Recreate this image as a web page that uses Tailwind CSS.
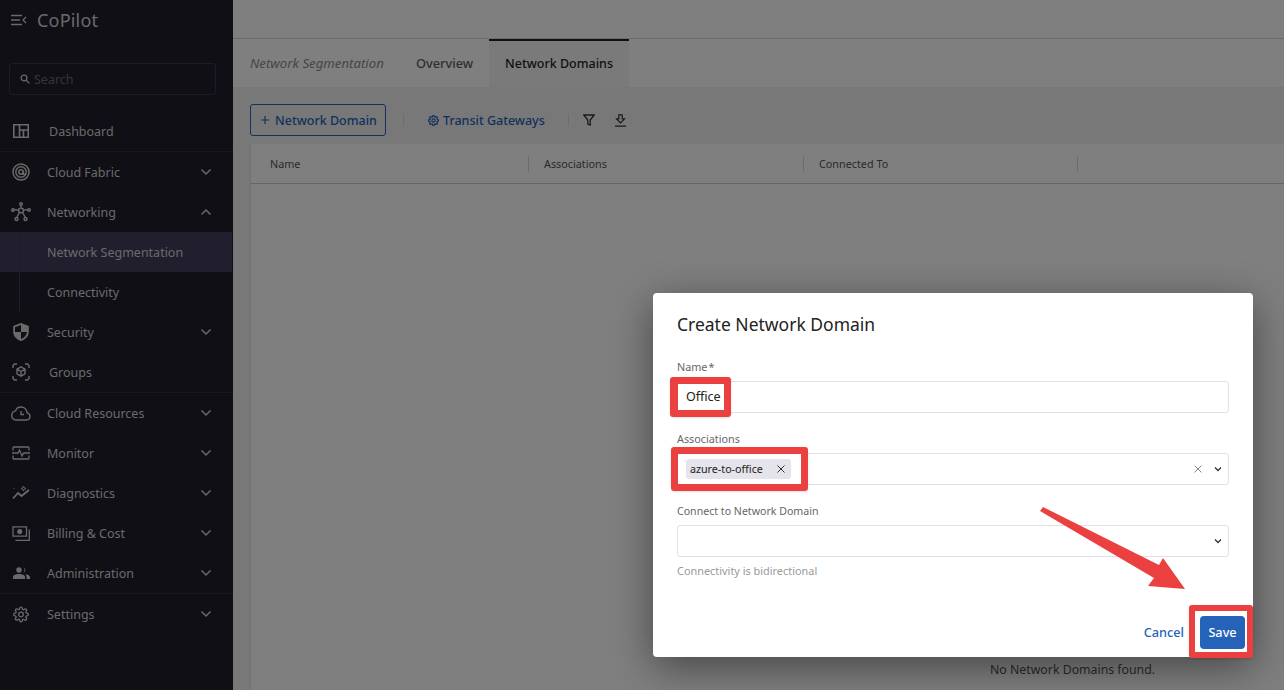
<!DOCTYPE html>
<html lang="en">
<head>
  <meta charset="UTF-8" />
  <title>CoPilot | Network Domains</title>
  <script src="https://cdn.jsdelivr.net/npm/@tailwindcss/browser@4"></script>
</head>
<body class="relative w-[1284px] h-[690px] overflow-hidden bg-[#f0f0f0] font-['Noto_Sans',sans-serif] text-[#222]">

  <div class="flex h-[690px]">
    <!-- Sidebar -->
    <aside class="w-[233px] shrink-0 bg-[#1e1e2b] text-[#d4d4d4] text-[12.5px]">
      <div class="h-[40px] flex items-center pl-[11px] gap-[10px]">
        <svg class="w-[16px] h-[12px]" viewBox="0 0 16 12" fill="none" stroke="currentColor" stroke-width="1.3"><path d="M0 1.5h11M0 6h9M0 10.5h11M15 3l-3 3 3 3"/></svg>
        <span class="text-[18px] tracking-[0.2px]">CoPilot</span>
      </div>
      <div class="ml-[9px] mr-[17px] mt-[23px] h-[32px] border border-[#38384a] rounded-[3px] flex items-center pl-[10px] gap-[4px] text-[#6b6b75]">
        <svg class="w-[10px] h-[10px] text-[#cfcfcf]" viewBox="0 0 10 10" fill="none" stroke="currentColor" stroke-width="1.3"><circle cx="4" cy="4" r="2.9"/><path d="M6.2 6.2 9.4 9.4"/></svg>
        <span class="text-[12.5px] pt-[2px]">Search</span>
      </div>

      <nav class="mt-[16px]">
        <div class="h-[40px] flex items-center pl-[13px] pr-[21px]">
          <svg class="w-[16px] h-[14px]" viewBox="0 0 16 14" fill="none" stroke="currentColor" stroke-width="1.6"><path d="M.8.8h14.4v12.4H.8zM6.5.8v12.4M6.5 6h8.7M10.5 6v7.2"/></svg>
          <span class="ml-[20px] pt-[2px]">Dashboard</span>
        </div>
        <div class="h-px bg-[#30303e]"></div>
        <div class="h-[40px] flex items-center pl-[12px] pr-[21px]">
          <svg class="w-[18px] h-[18px]" viewBox="0 0 18 18" fill="none" stroke="currentColor" stroke-width="1.5"><circle cx="9" cy="9" r="8"/><circle cx="9" cy="9" r="5.2"/><circle cx="9" cy="9" r="2.2"/><path d="M11.2 8v3.2h2"/></svg>
          <span class="ml-[17px] pt-[2px]">Cloud Fabric</span>
          <svg class="ml-auto w-[12px] h-[8px]" viewBox="0 0 12 8" fill="none" stroke="currentColor" stroke-width="1.5"><path d="M1.5 1.5 6 6l4.500-4.500"/></svg>
        </div>
        <div class="h-[40px] flex items-center pl-[11px] pr-[21px]">
          <svg class="w-[20px] h-[20px]" viewBox="0 0 20 20" fill="none" stroke="currentColor" stroke-width="1.4"><path d="m7.8 7 2.2-1.200L12.200 7v2.800L10 11 7.800 9.800zM10 5.800V3.200M7.800 8.200 3.600 7.600M12.200 8.200l4.200-.6M8.200 10.800 6 15M11.800 10.800 14 15"/><circle cx="10" cy="2" r="1.300"/><circle cx="2" cy="8" r="1.300"/><circle cx="18" cy="8" r="1.300"/><circle cx="5.500" cy="17" r="1.500"/><circle cx="14.500" cy="17" r="1.500"/></svg>
          <span class="ml-[16px] pt-[2px]">Networking</span>
          <svg class="ml-auto w-[12px] h-[8px]" viewBox="0 0 12 8" fill="none" stroke="currentColor" stroke-width="1.5"><path d="M1.500 6.500 6 2l4.500 4.500"/></svg>
        </div>
        <div class="relative">
          <div class="absolute left-[19px] top-0 bottom-0 w-px bg-[#3a3a4a]"></div>
          <div class="h-[40px] mr-px flex items-center pl-[47px] pt-[2px] bg-[#433c5c]">Network Segmentation</div>
          <div class="h-[40px] flex items-center pl-[47px] pt-[2px]">Connectivity</div>
        </div>
        <div class="h-[40px] flex items-center pl-[13px] pr-[21px]">
          <svg class="w-[16px] h-[18px]" viewBox="0 0 16 18" fill="currentColor"><path d="M8 0 .2 3v5.500C.2 13 3.300 16.700 8 18c4.700-1.300 7.800-5 7.800-9.500V3zM8 2v7H2V4.300zM8 9h6c-.4 3.300-2.700 5.900-6 7z"/></svg>
          <span class="ml-[18px] pt-[2px]">Security</span>
          <svg class="ml-auto w-[12px] h-[8px]" viewBox="0 0 12 8" fill="none" stroke="currentColor" stroke-width="1.5"><path d="M1.500 1.500 6 6l4.500-4.500"/></svg>
        </div>
        <div class="h-[40px] flex items-center pl-[12px] pr-[21px]">
          <svg class="w-[18px] h-[18px]" viewBox="0 0 18 18" fill="none" stroke="currentColor" stroke-width="1.400"><path d="M1 5V2.500L2.500 1H5M13 1h2.500L17 2.500V5M17 13v2.500L15.500 17H13M5 17H2.500L1 15.500V13M9 3.800l4 2.300v4.800l-4 2.300-4-2.300V6.100zM5 6.100l4 2.400 4-2.400M9 8.500v4.700"/></svg>
          <span class="ml-[19px] pt-[2px]">Groups</span>
        </div>
        <div class="h-px bg-[#30303e]"></div>
        <div class="h-[40px] flex items-center pl-[11px] pr-[21px]">
          <svg class="w-[20px] h-[15px]" viewBox="0 0 20 15" fill="none" stroke="currentColor" stroke-width="1.400"><path d="M5 14h10.500a3.600 3.600 0 0 0 .7-7.100C15.700 3.300 13 1 10 1 7.400 1 5.300 2.600 4.500 4.900A4.600 4.600 0 0 0 5 14zM10 5v3.500h3"/></svg>
          <span class="ml-[16px] pt-[2px]">Cloud Resources</span>
          <svg class="ml-auto w-[12px] h-[8px]" viewBox="0 0 12 8" fill="none" stroke="currentColor" stroke-width="1.5"><path d="M1.500 1.500 6 6l4.500-4.500"/></svg>
        </div>
        <div class="h-[40px] flex items-center pl-[12px] pr-[21px]">
          <svg class="w-[18px] h-[14px]" viewBox="0 0 18 14" fill="none" stroke="currentColor" stroke-width="1.300"><path d="M1 4.500V1.700L1.700 1h14.600l.7.700v2.800M1 9.500v2.800l.7.700h14.600l.7-.7V9.500M0 7h6l1.500-3 2.500 6 1.500-3H18"/></svg>
          <span class="ml-[17px] pt-[2px]">Monitor</span>
          <svg class="ml-auto w-[12px] h-[8px]" viewBox="0 0 12 8" fill="none" stroke="currentColor" stroke-width="1.5"><path d="M1.500 1.500 6 6l4.500-4.500"/></svg>
        </div>
        <div class="h-[40px] flex items-center pl-[12px] pr-[21px]">
          <svg class="w-[18px] h-[14px]" viewBox="0 0 18 14" fill="none" stroke="currentColor" stroke-width="1.800"><path d="m1 12.500 5-5.500 3.500 3L17 4"/><path d="M11.500 0l.7 1.800 1.800.7-1.800.7-.7 1.800-.7-1.800L9 2.500l1.800-.7zM1.500 2.500h.8" stroke-width="1"/></svg>
          <span class="ml-[17px] pt-[2px]">Diagnostics</span>
          <svg class="ml-auto w-[12px] h-[8px]" viewBox="0 0 12 8" fill="none" stroke="currentColor" stroke-width="1.5"><path d="M1.500 1.500 6 6l4.500-4.500"/></svg>
        </div>
        <div class="h-[40px] flex items-center pl-[12px] pr-[21px]">
          <svg class="w-[18px] h-[15px]" viewBox="0 0 18 15" fill="none" stroke="currentColor" stroke-width="1.300"><path d="M1 .8h13.500v9.400H1z"/><circle cx="7.700" cy="5.500" r="1.900" fill="currentColor"/><path d="M17.300 3.500v10.800H3.500"/></svg>
          <span class="ml-[17px] pt-[2px]">Billing &amp; Cost</span>
          <svg class="ml-auto w-[12px] h-[8px]" viewBox="0 0 12 8" fill="none" stroke="currentColor" stroke-width="1.5"><path d="M1.500 1.500 6 6l4.500-4.500"/></svg>
        </div>
        <div class="h-[40px] flex items-center pl-[13px] pr-[21px]">
          <svg class="w-[17px] h-[12px]" viewBox="0 0 17 12" fill="currentColor"><circle cx="6" cy="3" r="2.700"/><path d="M0 12V10c0-1.800 2.700-3 6-3s6 1.200 6 3v2z"/><path d="M10.500.5a2.700 2.700 0 0 1 0 5.200 4 4 0 0 0 0-5.200zM12.500 7.300c2.500.3 4.500 1.300 4.500 2.800V12h-3.500v-2c0-1-.4-2-1-2.700z"/></svg>
          <span class="ml-[17px] pt-[2px]">Administration</span>
          <svg class="ml-auto w-[12px] h-[8px]" viewBox="0 0 12 8" fill="none" stroke="currentColor" stroke-width="1.5"><path d="M1.500 1.500 6 6l4.500-4.500"/></svg>
        </div>
        <div class="h-px bg-[#30303e]"></div>
        <div class="h-[40px] flex items-center pl-[13px] pr-[21px]">
          <svg class="w-[16px] h-[17px]" viewBox="0 0 24 24" fill="none" stroke="currentColor" stroke-width="2"><path d="M12 15.500a3.500 3.500 0 1 0 0-7 3.500 3.500 0 0 0 0 7z"/><path d="M19.400 15a1.700 1.700 0 0 0 .3 1.800l.1.100a2 2 0 1 1-2.900 2.900l-.1-.1a1.700 1.700 0 0 0-2.800 1.200V21a2 2 0 1 1-4 0v-.1a1.700 1.700 0 0 0-2.900-1.200l-.1.100a2 2 0 1 1-2.800-2.900l.1-.1a1.700 1.700 0 0 0-1.200-2.800H3a2 2 0 1 1 0-4h.1a1.700 1.700 0 0 0 1.200-2.900l-.1-.1a2 2 0 1 1 2.900-2.800l.1.100a1.700 1.700 0 0 0 2.800-1.200V3a2 2 0 1 1 4 0v.1a1.700 1.700 0 0 0 2.900 1.200l.1-.1a2 2 0 1 1 2.800 2.900l-.1.100a1.700 1.700 0 0 0 1.200 2.800h.1a2 2 0 1 1 0 4h-.1a1.700 1.700 0 0 0-1.500 1z"/></svg>
          <span class="ml-[18px] pt-[2px]">Settings</span>
          <svg class="ml-auto w-[12px] h-[8px]" viewBox="0 0 12 8" fill="none" stroke="currentColor" stroke-width="1.5"><path d="M1.500 1.500 6 6l4.500-4.500"/></svg>
        </div>
      </nav>
    </aside>

    <!-- Main -->
    <main class="flex-1 min-w-0 flex flex-col">
      <div class="h-[39px] shrink-0 bg-white border-b border-[#d8d8d8]"></div>
      <div class="h-[48px] shrink-0 bg-white flex text-[12.5px] font-medium">
        <span class="w-[183px] pl-[17px] pt-[2px] flex items-center italic font-normal text-[13.2px] text-[#8a8a8a]">Network Segmentation</span>
        <span class="w-[73px] flex items-center pt-[1px] text-[12.8px] text-[#5e5e5e]">Overview</span>
        <span class="w-[140px] flex items-center justify-center bg-[#f5f5f5] border-t-2 border-[#1e1e2b] text-[#1e1e2b]">Network Domains</span>
      </div>
      <div class="flex-1 min-h-0 flex flex-col pl-[17px] bg-[#f1f1f1]">
        <div class="h-[57px] shrink-0 flex items-center pt-[9px] text-[12.5px] font-medium text-[#2563b8]">
          <div class="w-[136px] h-[32px] border border-[#2563b8] rounded-[3px] flex items-center pl-[10px] gap-[6px]">
            <svg class="w-[8px] h-[8px]" viewBox="0 0 8 8" stroke="currentColor" stroke-width="1.200"><path d="M4 0v8M0 4h8"/></svg>
            <span class="pt-[2px]">Network Domain</span>
          </div>
          <div class="ml-[17px] w-px h-[12px] bg-[#dcdcdc]"></div>
          <svg class="ml-[24px] w-[11px] h-[11px]" viewBox="0 0 24 24" fill="none" stroke="currentColor" stroke-width="2.600"><path d="M12 15.500a3.500 3.500 0 1 0 0-7 3.500 3.500 0 0 0 0 7z"/><path d="M19.400 15a1.700 1.700 0 0 0 .3 1.800l.1.100a2 2 0 1 1-2.900 2.900l-.1-.1a1.700 1.700 0 0 0-2.800 1.200V21a2 2 0 1 1-4 0v-.1a1.700 1.700 0 0 0-2.900-1.200l-.1.100a2 2 0 1 1-2.800-2.900l.1-.1a1.700 1.700 0 0 0-1.200-2.800H3a2 2 0 1 1 0-4h.1a1.700 1.700 0 0 0 1.200-2.900l-.1-.1a2 2 0 1 1 2.900-2.800l.1.100a1.700 1.700 0 0 0 2.800-1.200V3a2 2 0 1 1 4 0v.1a1.700 1.700 0 0 0 2.900 1.200l.1-.1a2 2 0 1 1 2.800 2.900l-.1.100a1.700 1.700 0 0 0 1.200 2.800h.1a2 2 0 1 1 0 4h-.1a1.700 1.700 0 0 0-1.500 1z"/></svg>
          <span class="ml-[4px] pt-[2px]">Transit Gateways</span>
          <div class="ml-[23px] w-px h-[12px] bg-[#dcdcdc]"></div>
          <svg class="ml-[14px] w-[12px] h-[12px] text-[#333]" viewBox="0 0 12 12" fill="none" stroke="currentColor" stroke-width="1.300"><path d="M.8 1h10.400L7.200 6v5L4.800 10V6z"/></svg>
          <svg class="ml-[20px] w-[11px] h-[13px] text-[#333]" viewBox="0 0 11 13" fill="none" stroke="currentColor" stroke-width="1.200"><path d="M3.800 .8h3.400v4h2.300L5.500 9 1.500 4.800h2.300zM0 12.200h11"/></svg>
        </div>
        <div class="flex-1 min-h-0 bg-white rounded-tl-[4px] border-l border-[#e0e0e0] flex flex-col">
          <div class="h-[40px] shrink-0 flex items-center border-b border-[#c8c8c8] bg-white text-[10.8px] text-[#555]">
            <div class="w-[278px] h-[16px] flex items-center pl-[19px] pt-[2px] border-r border-[#d8d8d8]">Name</div>
            <div class="w-[275px] h-[16px] flex items-center pl-[15px] pt-[2px] border-r border-[#d8d8d8]">Associations</div>
            <div class="w-[274px] h-[16px] flex items-center pl-[15px] pt-[2px] border-r border-[#d8d8d8]">Connected To</div>
          </div>
          <div class="flex-1 pt-[477px] pl-[739px] text-[12.3px] leading-[18px] text-[#555] whitespace-nowrap">No Network Domains found.</div>
        </div>
      </div>
    </main>
  </div>

  <!-- Backdrop -->
  <div class="absolute inset-0 bg-black/50"></div>

  <!-- Dialog -->
  <div class="absolute left-[653px] top-[293px] w-[600px] h-[364px] bg-white rounded-[4px] shadow-[0_10px_40px_rgba(0,0,0,0.45)] px-[24px] pt-[19px]">
    <h2 class="text-[17.5px] leading-[25px] text-[#222]">Create Network Domain</h2>
    <label class="block mt-[23px] text-[10.8px] leading-[14px] text-[#666]">Name<span class="ml-[1px]">*</span></label>
    <div class="mt-[7px] h-[32px] border border-[#e0e0e6] rounded-[3px] flex items-center pl-[8px] text-[12.5px] text-[#222]">Office</div>
    <label class="block mt-[19px] text-[10.8px] leading-[14px] text-[#666]">Associations</label>
    <div class="mt-[7px] h-[32px] border border-[#e0e0e6] rounded-[3px] flex items-center pl-[8px] pr-[6px]">
      <span class="h-[20px] w-[105px] pl-[4px] pr-[6px] rounded-[3px] bg-[#e4e4ea] flex items-center justify-between text-[10.7px] text-[#222]">
        azure-to-office
        <svg class="w-[8px] h-[8px]" viewBox="0 0 8 8" stroke="#333" stroke-width="1"><path d="m.5.5 7 7M7.500.5l-7 7"/></svg>
      </span>
      <svg class="ml-auto w-[8px] h-[8px]" viewBox="0 0 8 8" stroke="#888" stroke-width="1"><path d="m.5.5 7 7M7.500.5l-7 7"/></svg>
      <svg class="ml-[12px] w-[8px] h-[6px]" viewBox="0 0 8 6" fill="none" stroke="#333" stroke-width="1.300"><path d="M1 1.500 4 4.500l3-3"/></svg>
    </div>
    <label class="block mt-[19px] text-[10.600px] leading-[14px] text-[#666]">Connect to Network Domain</label>
    <div class="mt-[7px] h-[32px] border border-[#e0e0e6] rounded-[3px] flex items-center justify-end pr-[6px]">
      <svg class="w-[8px] h-[6px]" viewBox="0 0 8 6" fill="none" stroke="#333" stroke-width="1.300"><path d="M1 1.500 4 4.500l3-3"/></svg>
    </div>
    <p class="mt-[7px] text-[10.900px] leading-[14px] text-[#999]">Connectivity is bidirectional</p>
    <div class="mt-[38px] flex items-center justify-end gap-[16px] -mr-[16px] text-[12.7px] font-medium">
      <span class="text-[#2563b8]">Cancel</span>
      <span class="w-[45px] h-[33px] rounded-[4px] bg-[#2563b8] text-white flex items-center justify-center">Save</span>
    </div>
  </div>

  <!-- Screenshot annotations -->
  <div class="absolute left-[670px] top-[377px] w-[61px] h-[40px] border-[7px] border-l-[8px] border-[#eb4040] rounded-[3px] shadow-sm"></div>
  <div class="absolute left-[671px] top-[447px] w-[137px] h-[44px] border-[7px] border-[#eb4040] rounded-[3px] shadow-sm"></div>
  <div class="absolute left-[1189px] top-[605px] w-[64px] h-[53px] border-[6px] border-[#eb4040] rounded-[3px] shadow-sm"></div>
  <svg class="absolute left-0 top-0 w-[1284px] h-[690px] pointer-events-none" viewBox="0 0 1284 690">
    <path d="M1043 507 1159 565 1163 558 1185 589 1148 586 1154 578 1040 511Z" fill="#eb4040"/>
  </svg>
</body>
</html>
